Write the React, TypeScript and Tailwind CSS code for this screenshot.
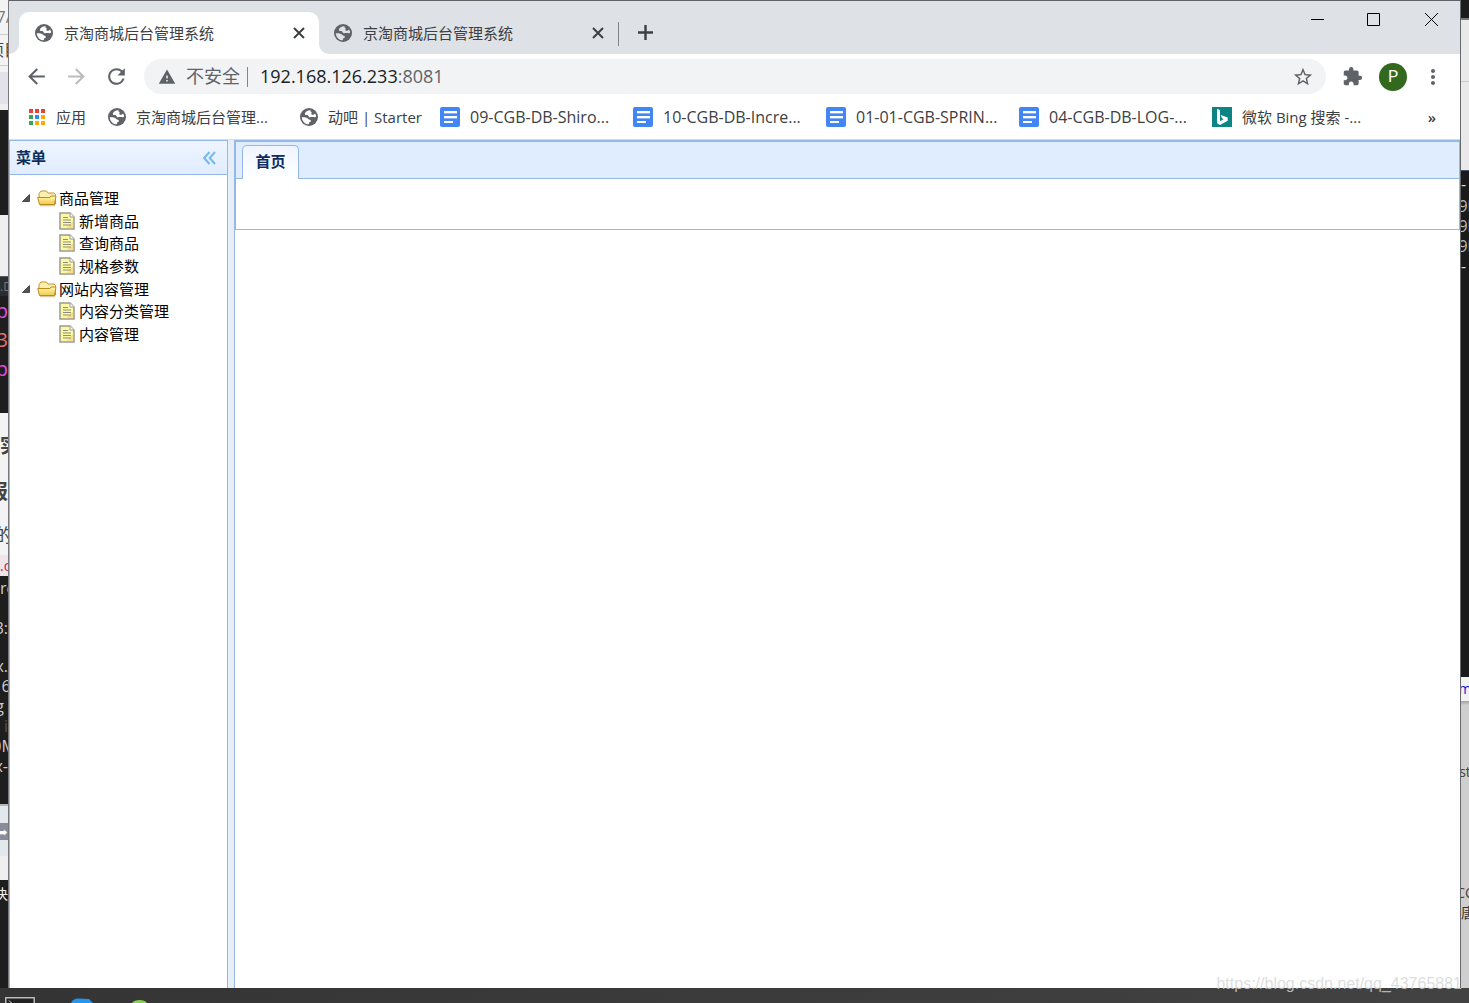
import React from "react";
import {
  MdArrowBack,
  MdArrowForward,
  MdExtension,
  MdMoreVert,
  MdRefresh,
  MdStarBorder,
  MdWarning,
} from "react-icons/md";

type Piece = { box: string; text?: string };

/* Slivers of the windows that lie behind the browser, left side */
const leftPieces: Piece[] = [
  { box: "h-[35px] bg-[#f3f3f3] text-[#777] text-base border-b border-[#ccc] justify-center", text: "7/" },
  { box: "h-[31px] bg-[#f3f3f3] text-[#444] text-base border-b border-[#ccc] justify-center", text: "项目" },
  { box: "h-[6px] bg-[#f3f3f3]" },
  { box: "h-[32px] bg-[#e2e2e8]" },
  { box: "h-[6px] bg-[#eeeeee]" },
  { box: "h-[105px] bg-[#1e1e1e]" },
  { box: "h-[61px] bg-[#efefef]" },
  { box: "h-[20px] bg-[#2b2d2f] text-[#777] text-xs border-t border-[#556] justify-start", text: ".D" },
  { box: "h-[30px] bg-[#1e1e1e] text-[#e44be4] text-xl justify-end", text: "p" },
  { box: "h-[28px] bg-[#1e1e1e] text-[#e8706a] text-xl justify-end", text: "3" },
  { box: "h-[30px] bg-[#1e1e1e] text-[#e44be4] text-xl justify-end", text: "p" },
  { box: "h-[29px] bg-[#1e1e1e]" },
  { box: "h-[10px] bg-[#f3f3f3]" },
  { box: "h-[46px] bg-[#f3f3f3] text-[#444] text-xl font-bold justify-center", text: "x实" },
  { box: "h-[45px] bg-[#f3f3f3] text-[#444] text-xl font-bold justify-end", text: "报" },
  { box: "h-[41px] bg-[#f3f3f3] text-[#444] text-lg justify-center", text: "的" },
  { box: "h-[21px] bg-[#efe4e7] text-[#c7254e] text-sm justify-start", text: ".c" },
  { box: "h-[24px] bg-[#1e1e1e] text-[#ccc] text-base justify-start", text: "rc" },
  { box: "h-[16px] bg-[#1e1e1e]" },
  { box: "h-[24px] bg-[#1e1e1e] text-[#ccc] text-base justify-end", text: "3:" },
  { box: "h-[16px] bg-[#1e1e1e]" },
  { box: "h-[20px] bg-[#1e1e1e] text-[#ccc] text-base justify-end", text: "x." },
  { box: "h-[20px] bg-[#1e1e1e] text-[#ccc] text-base justify-center", text: " 6" },
  { box: "h-[20px] bg-[#1e1e1e] text-[#ccc] text-base justify-end", text: "g " },
  { box: "h-[20px] bg-[#1e1e1e] text-[#555] text-base justify-end", text: "i" },
  { box: "h-[20px] bg-[#1e1e1e] text-[#ccc] text-base justify-center", text: "0M" },
  { box: "h-[20px] bg-[#1e1e1e] text-[#ccc] text-base justify-end", text: "x-" },
  { box: "h-[30px] bg-[#1e1e1e] border-b-2 border-[#b9b4b9]" },
  { box: "h-[17px] bg-[#e3e8ed]" },
  { box: "h-[17px] bg-[#8a8a9a] text-white text-sm justify-end", text: "➦" },
  { box: "h-[16px] bg-[#e3e8ed]" },
  { box: "h-[24px] bg-[#efefef]" },
  { box: "h-[28px] bg-[#1e1e1e] text-[#eee] text-sm justify-end", text: "决" },
  { box: "flex-1 bg-[#1e1e1e]" },
];

/* Slivers of the windows behind, right side */
const rightPieces: Piece[] = [
  { box: "h-[20px] bg-[#1c1c1c] border-b-2 border-[#777]" },
  { box: "h-[62px] bg-[#e9e9e9] border-b border-[#ccc]" },
  { box: "h-[88px] bg-[#e9e9e9]" },
  { box: "h-[26px] bg-[#1a1a1a] text-[#ddd] text-base border-t border-[#456]", text: "-" },
  { box: "h-[20px] bg-[#1a1a1a] text-[#bbb] text-base justify-center", text: "9l" },
  { box: "h-[20px] bg-[#1a1a1a] text-[#bbb] text-base justify-center", text: "9l" },
  { box: "h-[20px] bg-[#1a1a1a] text-[#bbb] text-base justify-center", text: "9l" },
  { box: "h-[20px] bg-[#1a1a1a] text-[#ddd] text-base", text: "-" },
  { box: "h-[401px] bg-[#1a1a1a]" },
  { box: "h-[24px] bg-[#f2f2f2] text-[#1414d2] text-sm justify-center", text: "m" },
  { box: "h-[4px] bg-linear-to-b from-[#a0a0a0] to-[#cfcfcf]" },
  { box: "h-[53px] bg-[#cfcfcf]" },
  { box: "h-[28px] bg-[#cfcfcf] text-[#444] text-sm justify-center", text: "st" },
  { box: "h-[97px] bg-[#cfcfcf]" },
  { box: "h-[20px] bg-[#cfcfcf] text-[#444] text-sm justify-center", text: "CC" },
  { box: "h-[20px] bg-[#cfcfcf] text-[#333] text-sm", text: "唐" },
  { box: "flex-1 bg-[#cfcfcf]" },
];

function Strip({ pieces, side }: { pieces: Piece[]; side: "left" | "right" }) {
  return (
    <div
      aria-hidden="true"
      className={
        side === "left"
          ? "flex w-[9px] shrink-0 flex-col overflow-hidden border-r border-[#77797e]"
          : "flex w-[9px] shrink-0 flex-col overflow-hidden border-l border-[#66686c]"
      }
    >
      {pieces.map((p, i) => (
        <div key={i} className={`flex shrink-0 items-center overflow-hidden whitespace-pre leading-none ${p.box}`}>
          {p.text}
        </div>
      ))}
    </div>
  );
}

function GlobeIcon({ land = "#fff" }: { land?: string }) {
  return (
    <svg width="18" height="18" viewBox="0 0 18 18" className="shrink-0">
      <circle cx="9" cy="9" r="9" fill="#5f6368" />
      <path
        d="M10.500 2.200C7.800 2 5.500 3.300 4.900 5.400c-.2 1.200.5 1.700 1.600 1.700 1.200 0 1.700.5 2.200 1.300.6.900 1.800.9 2.800.7 1-.3 1.900 0 2.900.1.900.1 1.500-.3 1.800-1-.2-1.200-.6-2-1.200-2.800-.6.900-1.300 1.300-2.300 1.300-1 .1-1.600-.4-1.300-1.200.5-.8.200-1.600-.9-1.900z"
        fill={land}
      />
      <path
        d="M1.800 9.300c.1 3.500 2.600 6.400 5.800 7 1.200.1 1.400-.5 1.500-1.300.1-.7.700-1 1.300-1.300.8-.4.7-1.400-.1-1.800-.8-.4-1.500-.3-2.200-1.200-1.200-1.200-3.400-1.700-6.300-1.400z"
        fill={land}
      />
    </svg>
  );
}

function DocsIcon() {
  return (
    <svg width="20" height="20" viewBox="0 0 20 20" className="shrink-0">
      <rect width="20" height="20" rx="2" fill="#4285f4" />
      <path d="M4 4h13v2H4zM4 9h13v2H4zM4 14h9v2H4z" fill="#fff" />
      <path d="M4 6h13v1H4zM4 11h13v1H4z" fill="#fff" fillOpacity=".35" />
    </svg>
  );
}

function BingIcon() {
  return (
    <svg width="20" height="20" viewBox="0 0 20 20" className="shrink-0">
      <rect width="20" height="20" fill="#0c8484" />
      <path d="M5 2l3 1v11.300l3.800-2.200-1.900-.9-1.200-3.200 7 2.500v3.200L8 18l-3-1.700z" fill="#fff" />
    </svg>
  );
}

function AppsIcon() {
  const colors = ["#ea4335", "#ea4335", "#ea4335", "#34a853", "#2b8df0", "#fbab05", "#34a853", "#fbab05", "#fbab05"];
  return (
    <svg width="18" height="18" viewBox="0 0 18 18" className="shrink-0">
      {colors.map((c, i) => (
        <rect key={i} x={1 + (i % 3) * 6} y={1 + Math.floor(i / 3) * 6} width="4" height="4" fill={c} />
      ))}
    </svg>
  );
}

function FolderIcon() {
  return (
    <svg width="20" height="18" viewBox="0 0 20 18" className="shrink-0">
      <defs>
        <linearGradient id="folderFront" x1="0" y1="0" x2="0" y2="1">
          <stop offset="0" stopColor="#fff9b0" />
          <stop offset="1" stopColor="#f2c94a" />
        </linearGradient>
      </defs>
      <path d="M3 15L2 12V4.500L4 2h5.500l1.500 2h6l1.500 1.500V15z" fill="#fbeeb0" stroke="#c4962c" />
      <path d="M2.500 15.500L.7 8.500h12.300l1-1.500h5l-1.500 8.500z" fill="url(#folderFront)" stroke="#bd8a20" />
      <path d="M3 16.700h15" stroke="#a77a1c" strokeOpacity=".5" />
    </svg>
  );
}

function FileIcon() {
  return (
    <svg width="16" height="18" viewBox="0 0 16 18" className="shrink-0">
      <path d="M1 1h10l4 4v12H1z" fill="#fcf9a4" stroke="#9a9a90" strokeWidth="1.500" />
      <path d="M11 1v4h4" fill="#fff" stroke="#9a9a90" />
      <path d="M14.200 9v7.200H7z" fill="#f7c97a" fillOpacity=".6" />
      <path d="M4 5.500h5M4 8h8M4 10.500h8M4 13h8" stroke="#8f8f78" strokeWidth="1.200" />
    </svg>
  );
}

function Tab({ active }: { active?: boolean }) {
  return (
    <div
      className={`relative flex h-[42px] items-center pr-[14px] ${
        active ? "w-[300px] rounded-t-[10px] bg-white pl-[16px]" : "w-[299px] pl-[15px]"
      }`}
    >
      {active && (
        <>
          <span className="absolute bottom-0 -left-[10px] size-[10px] bg-white">
            <span className="block size-full rounded-br-[10px] bg-[#dee1e6]" />
          </span>
          <span className="absolute bottom-0 -right-[10px] size-[10px] bg-white">
            <span className="block size-full rounded-bl-[10px] bg-[#dee1e6]" />
          </span>
        </>
      )}
      <GlobeIcon land={active ? "#fff" : "#dee1e6"} />
      <span className="ml-[11px] flex-1 whitespace-nowrap text-[15px] text-[#3c4043]">京淘商城后台管理系统</span>
      <button type="button" aria-label="关闭标签页" className="text-[#3c4043]">
        <svg width="12" height="12" viewBox="0 0 12 12">
          <path d="M1 1l10 10M11 1L1 11" stroke="currentColor" strokeWidth="2" />
        </svg>
      </button>
    </div>
  );
}

function Bookmark({ icon, label, width }: { icon: React.ReactNode; label: string; width?: string }) {
  return (
    <a href="#" className={`flex shrink-0 items-center gap-[10px] whitespace-nowrap ${width ?? ""}`}>
      {icon}
      <span>{label}</span>
    </a>
  );
}

const tree = [
  { label: "商品管理", folder: true },
  { label: "新增商品" },
  { label: "查询商品" },
  { label: "规格参数" },
  { label: "网站内容管理", folder: true },
  { label: "内容分类管理" },
  { label: "内容管理" },
];

export default function App() {
  return (
    <div className="relative flex h-screen flex-col overflow-hidden bg-[#3d3d3d] font-['Open_Sans','Noto_Sans_CJK_SC',sans-serif]">
      <div className="flex min-h-0 flex-1">
        <Strip pieces={leftPieces} side="left" />

        <div className="flex min-w-0 flex-1 flex-col border-t border-[#616266] bg-white">
          <header className="flex h-[53px] shrink-0 items-end bg-[#dee1e6] pl-[10px]">
            <Tab active />
            <Tab />
            <span className="mb-2 h-6 w-px bg-[#80868b]" />
            <button type="button" aria-label="新建标签页" className="mb-[14px] ml-[19px] text-[#3c4043]">
              <svg width="15" height="15" viewBox="0 0 15 15">
                <path d="M7.500 0v15M0 7.500h15" stroke="currentColor" strokeWidth="2.400" />
              </svg>
            </button>
            <div className="ml-auto flex items-center self-start pr-[22px] pt-3 text-black">
              <button type="button" aria-label="最小化" className="mr-[43px]">
                <svg width="13" height="13" viewBox="0 0 13 13"><path d="M0 6.500h13" stroke="currentColor" /></svg>
              </button>
              <button type="button" aria-label="最大化" className="mr-[45px]">
                <svg width="13" height="13" viewBox="0 0 13 13"><path d="M.5.5h12v12H.5z" fill="none" stroke="currentColor" /></svg>
              </button>
              <button type="button" aria-label="关闭">
                <svg width="13" height="13" viewBox="0 0 13 13"><path d="M0 0l13 13M13 0L0 13" stroke="currentColor" /></svg>
              </button>
            </div>
          </header>

          <div className="flex h-[45px] shrink-0 items-center pr-[15px] pl-[15px] text-[#5f6368]">
            <button type="button" aria-label="后退"><MdArrowBack size={25} /></button>
            <button type="button" aria-label="前进" className="ml-[15px] text-[#babcbe]"><MdArrowForward size={25} /></button>
            <button type="button" aria-label="重新加载" className="ml-[15px]"><MdRefresh size={25} /></button>
            <div className="ml-[15px] flex h-[35px] min-w-0 flex-1 items-center rounded-full bg-[#f1f3f4] pr-3 pl-[14px] text-[18px]">
              <MdWarning size={18} className="shrink-0" />
              <span className="ml-[10px] whitespace-nowrap">不安全</span>
              <span className="ml-[7px] h-5 w-px bg-[#80868b]" />
              <div className="ml-[12px] flex-1 whitespace-nowrap">
                <span className="text-[#202124]">192.168.126.233</span>:8081
              </div>
              <button type="button" aria-label="收藏"><MdStarBorder size={22} /></button>
            </div>
            <button type="button" aria-label="扩展程序" className="ml-4"><MdExtension size={21} /></button>
            <button
              type="button"
              aria-label="个人资料"
              className="ml-4 flex size-7 items-center justify-center rounded-full bg-[#33691e] font-[Roboto] text-base text-white"
            >
              P
            </button>
            <button type="button" aria-label="更多" className="ml-[14px]"><MdMoreVert size={24} /></button>
          </div>

          <nav className="flex h-[41px] shrink-0 items-center border-b border-[#dadce0] pr-[24px] pb-1 pl-[19px] text-[15px] text-[#3c4043]">
            <Bookmark icon={<AppsIcon />} label="应用" width="w-[80px]" />
            <Bookmark icon={<GlobeIcon />} label="京淘商城后台管理..." width="w-[192px]" />
            <Bookmark icon={<GlobeIcon />} label="动吧 | Starter" width="w-[140px]" />
            <Bookmark icon={<DocsIcon />} label="09-CGB-DB-Shiro..." width="w-[193px] text-base" />
            <Bookmark icon={<DocsIcon />} label="10-CGB-DB-Incre..." width="w-[193px] text-base" />
            <Bookmark icon={<DocsIcon />} label="01-01-CGB-SPRIN..." width="w-[193px] text-base" />
            <Bookmark icon={<DocsIcon />} label="04-CGB-DB-LOG-..." width="w-[193px] text-base" />
            <Bookmark icon={<BingIcon />} label="微软 Bing 搜索 -..." />
            <button type="button" aria-label="更多书签" className="ml-auto font-semibold">»</button>
          </nav>

          <div className="flex min-h-0 flex-1 bg-[#e6eef8]">
            <aside className="flex w-[219px] shrink-0 flex-col border-x border-t border-[#95b8e7] bg-white">
              <div className="flex h-[34px] shrink-0 items-center justify-between border-b border-[#95b8e7] bg-linear-to-b from-[#eff5ff] to-[#e0ecff] pr-[11px] pl-[6px]">
                <h2 className="text-[15px] font-bold text-[#0e2d5f]">菜单</h2>
                <button type="button" aria-label="折叠菜单" className="text-[#73b9ee]">
                  <svg width="13" height="14" viewBox="0 0 13 14" fill="none" stroke="currentColor" strokeWidth="2">
                    <path d="M6.500 1L1.200 7l5.300 6M12 1L6.700 7l5.300 6" />
                  </svg>
                </button>
              </div>
              <ul className="mt-3 grid h-[158px] shrink-0 grid-rows-7 text-[15px] text-black">
                {tree.map((n) => (
                  <li key={n.label} className={n.folder ? "flex items-center pl-[12px]" : "flex items-center pl-[49px]"}>
                    <button type="button" className="flex items-center whitespace-nowrap leading-5">
                      {n.folder ? (
                        <>
                          <svg width="8" height="8" viewBox="0 0 8 8" className="mr-[7px]">
                            <path d="M7.500.5v7H.5z" fill="#555" stroke="#333" strokeWidth=".8" />
                          </svg>
                          <FolderIcon />
                          <span className="ml-[2px]">{n.label}</span>
                        </>
                      ) : (
                        <>
                          <FileIcon />
                          <span className="ml-1">{n.label}</span>
                        </>
                      )}
                    </button>
                  </li>
                ))}
              </ul>
            </aside>

            <main className="ml-[6px] min-w-0 flex-1 border-t border-l border-[#95b8e7] bg-white">
              <div className="border border-[#95b8e7]">
                <div className="flex h-[37px] items-end border-b border-[#95b8e7] bg-[#e0ecff] pl-[6px]">
                  <button
                    type="button"
                    className="-mb-px h-[34px] w-[57px] rounded-t-[5px] border border-b-0 border-[#95b8e7] bg-linear-to-b from-[#eff5ff] to-white pb-[2px] text-[15px] font-bold text-[#0e2d5f]"
                  >
                    首页
                  </button>
                </div>
                <div className="h-[50px]" />
              </div>
            </main>
          </div>
        </div>

        <Strip pieces={rightPieces} side="right" />
      </div>

      <footer aria-hidden="true" className="flex h-[15px] shrink-0 items-end overflow-hidden bg-linear-to-r from-[#343434] to-[#424242] pl-[5px]">
        <svg width="160" height="6" viewBox="0 0 160 6">
          <path d="M.8 6V.8h28.400V6" fill="#222" stroke="#bbb" strokeWidth="1.500" />
          <path d="M4 3.500l3 3" stroke="#ddd" />
          <path d="M66 6c1-3 4-4.500 7-4.500l11 .5 4 4z" fill="#2196f3" />
          <path d="M127 6c2-4 13-4 15 0z" fill="#8bd04a" />
        </svg>
      </footer>

      <span className="absolute right-[7px] bottom-[7px] whitespace-nowrap font-['Liberation_Sans'] text-base leading-6 text-[#d4d4d4]/80">
        https://blog.csdn.net/qq_43765881
      </span>
    </div>
  );
}
